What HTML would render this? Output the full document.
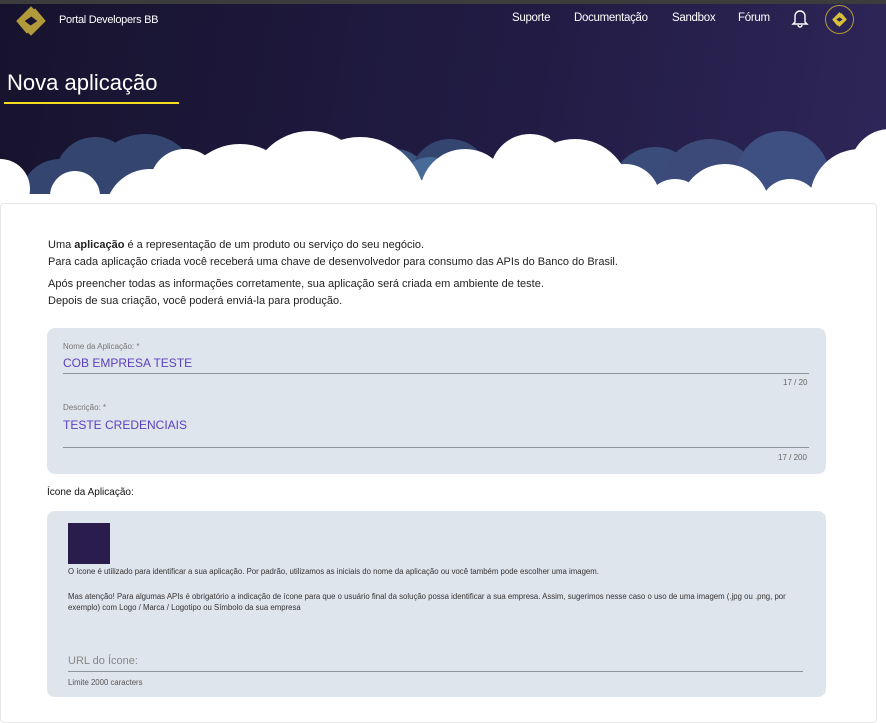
<!DOCTYPE html>
<html><head><meta charset="utf-8"><style>
*{margin:0;padding:0;box-sizing:border-box}
body{width:886px;height:718px;overflow:hidden;background:#fff;font-family:"Liberation Sans",sans-serif;position:relative}
.top{position:absolute;left:0;top:0;width:886px;height:4px;background:#3c3c3c}
.hdr{position:absolute;left:0;top:4px;width:886px;height:200px;background:linear-gradient(100deg,#17132e 0%,#221c45 60%,#2e2658 100%);overflow:hidden}
.c{position:absolute;border-radius:50%}
.d{background:#344670}.w{background:#fff}
.nav{position:absolute;top:8px;font-size:11.5px;letter-spacing:-0.3px;color:#fff}
h1{position:absolute;left:7px;top:66px;font-weight:normal;font-size:22px;color:#fff}
.ul{position:absolute;left:4px;top:98px;width:175px;height:2px;background:#f5dc1e}
.card{position:absolute;left:0;top:203px;width:877px;height:520px;border:1px solid #e6e6e6;border-radius:4px;background:#fff}
p{font-size:11px;color:#222;line-height:17px}
.box{position:absolute;background:#dfe5ec;border-radius:8px}
.lbl{position:absolute;font-size:8px;color:#777}
.val{position:absolute;font-size:12px;color:#5b3fc0}
.line{position:absolute;height:1px;background:#8a939e}
.cnt{position:absolute;font-size:8px;color:#666}
.sm{position:absolute;font-size:7.8px;color:#333;line-height:11px}
</style></head><body>
<div class="top"></div>
<div class="hdr">
<div style="position:absolute;left:0;top:15px;width:100%;height:200px">
 <div class="c d" style="left:20px;top:140px;width:80px;height:80px"></div>
 <div class="c d" style="left:55px;top:118px;width:80px;height:80px"></div>
 <div class="c d" style="left:90px;top:115px;width:110px;height:110px"></div>
 <div class="c d" style="left:195px;top:130px;width:60px;height:60px"></div>
 <div class="c d" style="left:360px;top:130px;width:70px;height:70px;background:#3b5480"></div>
 <div class="c d" style="left:410px;top:120px;width:80px;height:80px"></div>
 <div class="c d" style="left:240px;top:140px;width:60px;height:60px;background:#405a88"></div>
 <div class="c d" style="left:400px;top:138px;width:60px;height:60px;background:#476a98"></div>
 <div class="c d" style="left:610px;top:128px;width:90px;height:90px;background:#3a4c7a"></div>
 <div class="c d" style="left:660px;top:120px;width:100px;height:100px;background:#3b4a78"></div>
 <div class="c d" style="left:735px;top:112px;width:95px;height:95px;background:#3e4f82"></div>
 <div class="c w" style="left:-30px;top:140px;width:60px;height:60px"></div>
 <div class="c w" style="left:50px;top:152px;width:50px;height:50px"></div>
 <div class="c w" style="left:105px;top:150px;width:90px;height:90px"></div>
 <div class="c w" style="left:150px;top:130px;width:70px;height:70px"></div>
 <div class="c w" style="left:180px;top:125px;width:120px;height:120px"></div>
 <div class="c w" style="left:250px;top:112px;width:120px;height:120px"></div>
 <div class="c w" style="left:355px;top:130px;width:60px;height:60px"></div>
 <div class="c w" style="left:330px;top:155px;width:120px;height:80px"></div>
 <div class="c w" style="left:255px;top:132px;width:90px;height:90px"></div>
 <div class="c w" style="left:295px;top:118px;width:130px;height:130px"></div>
 <div class="c w" style="left:420px;top:130px;width:90px;height:90px"></div>
 <div class="c w" style="left:490px;top:115px;width:80px;height:80px"></div>
 <div class="c w" style="left:520px;top:120px;width:110px;height:110px"></div>
 <div class="c w" style="left:590px;top:145px;width:70px;height:70px"></div>
 <div class="c w" style="left:645px;top:160px;width:60px;height:60px"></div>
 <div class="c w" style="left:680px;top:145px;width:90px;height:90px"></div>
 <div class="c w" style="left:760px;top:160px;width:60px;height:60px"></div>
 <div class="c w" style="left:810px;top:130px;width:100px;height:100px"></div>
 <div class="c w" style="left:850px;top:110px;width:80px;height:80px"></div>
 <div style="position:absolute;left:0;top:175px;width:886px;height:30px;background:#fff"></div>
</div>
 <svg style="position:absolute;left:12px;top:-2px" width="38" height="38" viewBox="0 0 36 36"><g fill="#b09a3a"><polygon points="4,18 18,4 24,10 12,18 20,24 14,30"/><polygon points="32,18 18,32 12,26 24,18 16,12 22,6"/></g></svg>
 <div class="nav" style="left:59px;top:10px;font-size:11px">Portal Developers BB</div>
 <div class="nav" style="left:512px">Suporte</div>
 <div class="nav" style="left:574px">Documentação</div>
 <div class="nav" style="left:672px">Sandbox</div>
 <div class="nav" style="left:738px">Fórum</div>
 <svg style="position:absolute;left:791px;top:4px" width="18" height="20" viewBox="0 0 18 20"><path d="M4 14V8a5 5 0 0 1 10 0v6l2 2H2z M7 17a2 2 0 0 0 4 0" fill="none" stroke="#fff" stroke-width="1.4"/></svg>
 <div style="position:absolute;left:825px;top:1px;width:29px;height:29px;border:1.5px solid #b09a3a;border-radius:50%"></div>
 <svg style="position:absolute;left:830px;top:6px" width="19" height="19" viewBox="0 0 36 36"><g fill="#d6bf3a"><polygon points="4,18 18,4 24,10 12,18 20,24 14,30"/><polygon points="32,18 18,32 12,26 24,18 16,12 22,6"/></g></svg>
 <h1>Nova aplicação</h1>
 <div class="ul"></div>
</div>
<div class="card"></div>
<div style="position:absolute;left:48px;top:237px"><p>Uma <b>aplicação</b> é a representação de um produto ou serviço do seu negócio.<br>Para cada aplicação criada você receberá uma chave de desenvolvedor para consumo das APIs do Banco do Brasil.</p>
<p style="margin-top:5px">Após preencher todas as informações corretamente, sua aplicação será criada em ambiente de teste.<br>Depois de sua criação, você poderá enviá-la para produção.</p></div>
<div class="box" style="left:47px;top:328px;width:779px;height:146px"></div>
<div class="lbl" style="left:63px;top:342px">Nome da Aplicação: *</div>
<div class="val" style="left:63px;top:356px">COB EMPRESA TESTE</div>
<div class="line" style="left:63px;top:373px;width:746px"></div>
<div class="cnt" style="left:783px;top:378px">17 / 20</div>
<div class="lbl" style="left:63px;top:403px">Descrição: *</div>
<div class="val" style="left:63px;top:418px">TESTE CREDENCIAIS</div>
<div class="line" style="left:63px;top:447px;width:746px"></div>
<div class="cnt" style="left:778px;top:453px">17 / 200</div>
<div style="position:absolute;left:47px;top:487px;font-size:10px;color:#111">Ícone da Aplicação:</div>
<div class="box" style="left:47px;top:511px;width:779px;height:186px"></div>
<div style="position:absolute;left:68px;top:523px;width:42px;height:41px;background:#2a1d4d"></div>
<div class="sm" style="left:68px;top:566px">O ícone é utilizado para identificar a sua aplicação. Por padrão, utilizamos as iniciais do nome da aplicação ou você também pode escolher uma imagem.</div>
<div class="sm" style="left:68px;top:591px;width:725px">Mas atenção! Para algumas APIs é obrigatório a indicação de ícone para que o usuário final da solução possa identificar a sua empresa. Assim, sugerimos nesse caso o uso de uma imagem (.jpg ou .png, por exemplo) com Logo / Marca / Logotipo ou Símbolo da sua empresa</div>
<div style="position:absolute;left:68px;top:655px;font-size:11px;color:#888">URL do Ícone:</div>
<div class="line" style="left:68px;top:671px;width:735px"></div>
<div class="sm" style="left:68px;top:677px;color:#555">Limite 2000 caracters</div>
</body></html>
